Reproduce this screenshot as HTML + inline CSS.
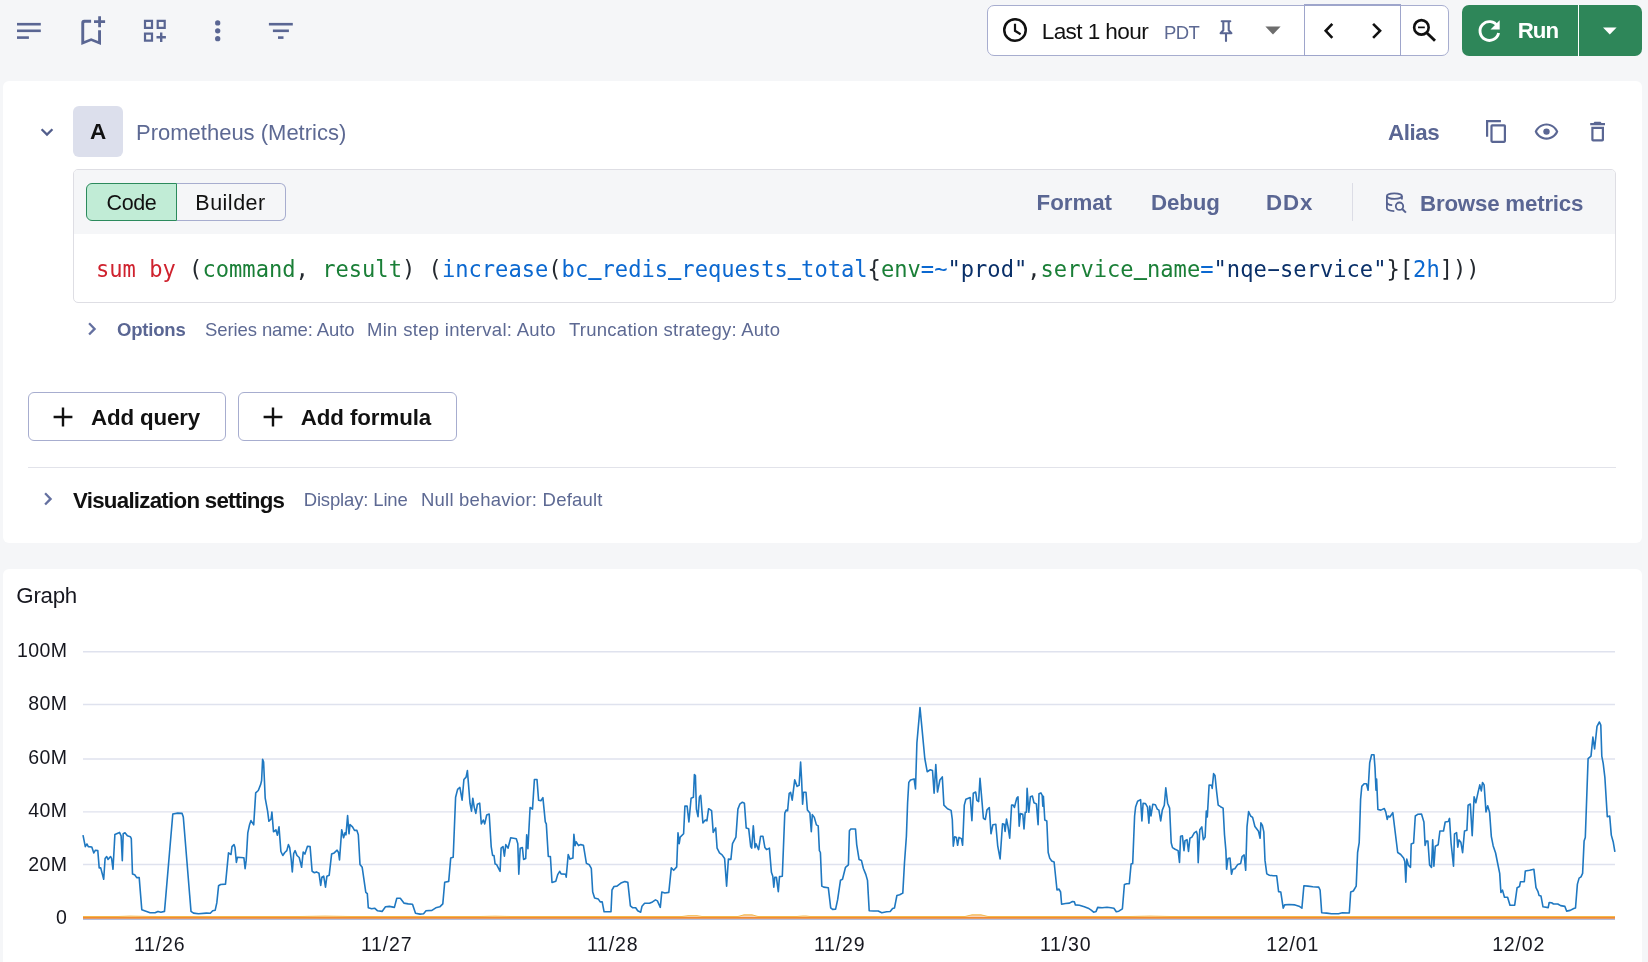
<!DOCTYPE html>
<html lang="en">
<head>
<meta charset="utf-8">
<title>Explore</title>
<style>
*{box-sizing:border-box;margin:0;padding:0}
html,body{width:1648px;height:962px;overflow:hidden}
body{background:#f5f6f8;font-family:"Liberation Sans",sans-serif;color:#16171f;position:relative}
.abs{position:absolute}
.t{position:absolute;white-space:pre;line-height:1}
.card{position:absolute;background:#fff;border-radius:6px}
svg{position:absolute;overflow:visible}
.ic{fill:#5a6693}
.sub{color:#5d6993}
.lnk{color:#5a6693;font-weight:700}
.mono{font-family:"DejaVu Sans Mono","Liberation Mono",monospace;font-size:22.1px}
.u{display:inline-block;transform-origin:50% 100%;transform:translateY(-4.5px) scaleY(2.2)}
.k{color:#cf222e}.g{color:#1a7f37}.b{color:#0b68d0}.d{color:#24292f}.s{color:#0a3069}
.yl{position:absolute;left:0;width:67.3px;text-align:right;font-size:19.5px;letter-spacing:.4px;line-height:1;white-space:pre;color:#16171f}
.xl{position:absolute;width:80px;text-align:center;font-size:19.5px;letter-spacing:.85px;line-height:1;white-space:pre;color:#16171f;top:934.5px}
</style>
</head>
<body><div style="position:absolute;left:0;top:0;width:1648px;height:962px;will-change:transform">
<!-- ===== top toolbar ===== -->
<svg class="ic" style="left:0;top:0" width="320" height="62" viewBox="0 0 320 62">
  <!-- notes -->
  <rect x="17" y="22.9" width="23.8" height="2.6"/><rect x="17" y="29.5" width="23.8" height="2.6"/><rect x="17" y="36.3" width="11.9" height="2.6"/>
  <!-- bookmark add -->
  <path d="M91.1 19.8H84.2a2.9 2.9 0 0 0-2.9 2.9V45.1L91.15 41.1 101 45.1V30.2H98.1V41L91.15 38.2 84.2 41V23.4a.7 .7 0 0 1 .7-.7H91.1z"/>
  <path d="M98.2 16.2h2.8v4.1h4.1v2.8h-4.1v4.1h-2.8v-4.1h-4.2v-2.8h4.2z"/>
  <!-- dashboard customize -->
  <path d="M143.9 19.8h9.2v9.2h-9.2zM146.1 22v4.8h4.8V22zM156.6 19.8h9.2v9.2h-9.2zM158.8 22v4.8h4.8V22zM143.9 32.5h9.2v9.2h-9.2zM146.1 34.7v4.8h4.8v-4.8z" fill-rule="evenodd"/>
  <path d="M160 32.5h2.4v3.5h3.5v2.4h-3.5v3.5H160v-3.5h-3.5v-2.4h3.5z"/>
  <!-- more vert -->
  <circle cx="217.7" cy="22.9" r="2.65"/><circle cx="217.7" cy="30.8" r="2.65"/><circle cx="217.7" cy="38.7" r="2.65"/>
  <!-- filter list -->
  <rect x="268.9" y="22.9" width="23.9" height="2.6"/><rect x="272.9" y="29.5" width="16" height="2.6"/><rect x="278" y="36.3" width="5.5" height="2.6"/>
</svg>

<!-- time picker -->
<div class="abs" style="left:987px;top:5px;width:462px;height:51px;background:#fff;border:1px solid #a7adcf;border-radius:7px"></div>
<div class="abs" style="left:1304.2px;top:4px;width:96.8px;height:52px;background:#fff;border:1px solid #9ea5cb;border-top-width:2px;border-left-width:1.6px;border-bottom-width:1.2px"></div>
<svg style="left:1002px;top:18px" width="26" height="26" viewBox="0 0 26 26"><circle cx="13" cy="11.95" r="10.75" fill="none" stroke="#111" stroke-width="2.5"/><path d="M13 5.8v7l5.6 3.4" fill="none" stroke="#111" stroke-width="2.2"/></svg>
<div class="t" style="left:1041.7px;top:20.5px;font-size:22.6px;color:#111;letter-spacing:-.6px">Last 1 hour</div>
<div class="t sub" style="left:1164px;top:23.5px;font-size:18.5px;letter-spacing:-.6px">PDT</div>
<svg style="left:1214.7px;top:18px" width="24" height="26" viewBox="0 0 24 26"><path d="M6.7 3.3h8.6M8.3 3.3v8.9l-2.7 3h10.8l-2.7-3v-8.9M11 15.2v7.7" fill="none" stroke="#5a6693" stroke-width="2.1" stroke-linejoin="round" stroke-linecap="round"/></svg>
<svg style="left:1264px;top:26px" width="18" height="10" viewBox="0 0 18 10"><path d="M1.4 .6h15.2l-7.6 7.900z" fill="#6d6d6d"/></svg>
<svg style="left:1318px;top:19px" width="22" height="24" viewBox="0 0 22 24"><path d="M14.3 4.8L7.7 11.85l6.6 7.05" fill="none" stroke="#111" stroke-width="2.6"/></svg>
<svg style="left:1366px;top:19px" width="22" height="24" viewBox="0 0 22 24"><path d="M7.1 4.8l6.96 7.05-6.96 7.05" fill="none" stroke="#111" stroke-width="2.6"/></svg>
<svg style="left:1410px;top:16px" width="30" height="30" viewBox="0 0 30 30"><circle cx="11.4" cy="11.4" r="7.25" fill="none" stroke="#111" stroke-width="2.6"/><path d="M16.7 16.7l8.3 8" stroke="#111" stroke-width="2.9"/><path d="M8 11.4h6.8" stroke="#111" stroke-width="1.7"/></svg>

<!-- run button -->
<div class="abs" style="left:1462px;top:5px;width:180px;height:51px;background:#2e8659;border-radius:7px"></div>
<div class="abs" style="left:1578.3px;top:5px;width:1.1px;height:51px;background:#fff"></div>
<svg style="left:1476px;top:17px" width="28" height="28" viewBox="0 0 28 28"><path d="M21.5 9.2A9.4 9.4 0 1 0 22.6 16" fill="none" stroke="#fff" stroke-width="2.9"/><path d="M23.7 3.3v9.2h-9.2z" fill="#fff"/></svg>
<div class="t" style="left:1517.8px;top:20.2px;font-size:22.3px;font-weight:700;color:#fff;letter-spacing:-1.05px">Run</div>
<svg style="left:1601px;top:26px" width="18" height="10" viewBox="0 0 18 10"><path d="M2 1.6h13.6L8.8 8.4z" fill="#fff"/></svg>
<!-- ===== query card ===== -->
<div class="card" style="left:2.7px;top:80.7px;width:1639.3px;height:462.3px"></div>
<svg style="left:38px;top:122.5px" width="18" height="18" viewBox="0 0 18 18"><path d="M3.6 6.2L9 11.6l5.4-5.4" fill="none" stroke="#525e8c" stroke-width="2.3"/></svg>
<div class="abs" style="left:73px;top:106px;width:50px;height:51px;background:#dcdfec;border-radius:6px"></div>
<div class="t" style="left:73px;width:50px;text-align:center;top:120.5px;font-size:22.5px;font-weight:700;color:#111">A</div>
<div class="t sub" style="left:136px;top:121.7px;font-size:22px;letter-spacing:0px">Prometheus (Metrics)</div>
<div class="t lnk" style="left:1388px;top:122px;font-size:22.3px;letter-spacing:-.38px">Alias</div>
<svg class="ic" style="left:1480px;top:116px" width="140" height="32" viewBox="0 0 140 32">
  <!-- copy -->
  <path d="M6 4.1h14.9v2.2H8.2v14.5H6z"/><path d="M12.2 8.2h12a1.8 1.8 0 0 1 1.8 1.8v15.1a1.8 1.8 0 0 1-1.8 1.8h-12a1.8 1.8 0 0 1-1.8-1.8V10a1.8 1.8 0 0 1 1.8-1.8zM12.6 10.4v14.3h11.2V10.4z" fill-rule="evenodd"/>
  <!-- eye -->
  <path d="M66.5 7.4c-5.7 0-10.2 3.7-11.8 8.2 1.6 4.5 6.1 8.2 11.8 8.2s10.2-3.7 11.8-8.2c-1.6-4.5-6.1-8.2-11.8-8.2zm0 2.2c4.3 0 7.9 2.6 9.4 6-1.5 3.4-5.1 6-9.4 6s-7.9-2.6-9.4-6c1.5-3.4 5.1-6 9.4-6z" fill-rule="evenodd"/><circle cx="66.5" cy="15.6" r="3.2"/>
  <!-- trash -->
  <path d="M114.5 5.7h6l1 1.2h3.5v2.3h-14.8V6.9h3.3z"/><path d="M111.3 10.7h12.7v13a1.8 1.8 0 0 1-1.8 1.8h-9.1a1.8 1.8 0 0 1-1.8-1.8zM113.5 12.9v10.4h8.3V12.9z" fill-rule="evenodd"/>
</svg>

<!-- code box -->
<div class="abs" style="left:73px;top:169px;width:1543px;height:134px;background:#fff;border:1px solid #dedee4;border-radius:5px;overflow:hidden"><div style="height:64px;background:#f5f6f8"></div></div>
<div class="abs" style="left:86px;top:183px;width:91px;height:38px;background:#c1ecd6;border:1px solid #2b8a5c;border-radius:6px 0 0 6px"></div>
<div class="abs" style="left:177px;top:183px;width:109px;height:38px;border:1px solid #a7adcf;border-left:none;border-radius:0 6px 6px 0"></div>
<div class="t" style="left:106.6px;top:193px;font-size:21.5px;color:#111;letter-spacing:-.45px">Code</div>
<div class="t" style="left:195.3px;top:193px;font-size:21.5px;color:#111;letter-spacing:.5px">Builder</div>
<div class="t lnk" style="left:1036.6px;top:192.2px;font-size:22.3px;letter-spacing:-.04px">Format</div>
<div class="t lnk" style="left:1151px;top:192.2px;font-size:22.3px;letter-spacing:-.1px">Debug</div>
<div class="t lnk" style="left:1266px;top:192.2px;font-size:22.3px;letter-spacing:.85px">DDx</div>
<div class="abs" style="left:1352px;top:183px;width:1px;height:38px;background:#dcdde6"></div>
<svg style="left:1380px;top:185.6px" width="30" height="30" viewBox="0 0 30 30"><g fill="none" stroke="#55618f" stroke-width="1.8"><ellipse cx="14.4" cy="10.1" rx="7.5" ry="2.8"/><path d="M6.9 10.1v12c0 1.7 3 2.9 7.4 3M21.9 10.1v3.4M6.9 16c0 1.7 2 2.9 5.3 3.2"/><circle cx="19.5" cy="20.2" r="3.7"/><path d="M22.3 23l3.6 3.6" stroke-width="2"/></g></svg>
<div class="t lnk" style="left:1420px;top:193px;font-size:22.3px;letter-spacing:-.2px">Browse metrics</div>

<div class="t mono" style="left:96px;top:257.6px"><span class="k">sum by</span><span class="d"> (</span><span class="g">command</span><span class="d">, </span><span class="g">result</span><span class="d">) (</span><span class="b">increase</span><span class="d">(</span><span class="b">bc<span class="u">_</span>redis<span class="u">_</span>requests<span class="u">_</span>total</span><span class="d">{</span><span class="g">env</span><span class="b">=~</span><span class="s">"prod"</span><span class="d">,</span><span class="g">service<span class="u">_</span>name</span><span class="b">=</span><span class="s">"nqe<span style="display:inline-block;transform:translateY(-1.2px) scaleX(1.9)">-</span>service"</span><span class="d">}[</span><span class="b">2h</span><span class="d">]))</span></div>

<!-- options row -->
<svg style="left:83px;top:320px" width="18" height="18" viewBox="0 0 18 18"><path d="M6.1 3.3l5.5 5.6-5.5 5.6" fill="none" stroke="#6470a0" stroke-width="2.3"/></svg>
<div class="t lnk" style="left:117px;top:320.8px;font-size:18.5px;letter-spacing:-.2px">Options</div>
<div class="t sub" style="left:205px;top:320.8px;font-size:18.5px;letter-spacing:-.1px">Series name: Auto</div>
<div class="t sub" style="left:367px;top:320.8px;font-size:18.5px;letter-spacing:.3px">Min step interval: Auto</div>
<div class="t sub" style="left:569px;top:320.8px;font-size:18.5px;letter-spacing:.25px">Truncation strategy: Auto</div>

<!-- add buttons -->
<div class="abs" style="left:28px;top:392px;width:198px;height:49px;background:#fff;border:1px solid #a7adcf;border-radius:6px"></div>
<div class="abs" style="left:238px;top:392px;width:219px;height:49px;background:#fff;border:1px solid #a7adcf;border-radius:6px"></div>
<svg style="left:52.9px;top:407.1px" width="20" height="20" viewBox="0 0 20 20"><path d="M10 .6v18.8M.6 10h18.8" stroke="#111" stroke-width="2.4"/></svg>
<svg style="left:262.9px;top:407.1px" width="20" height="20" viewBox="0 0 20 20"><path d="M10 .6v18.8M.6 10h18.8" stroke="#111" stroke-width="2.4"/></svg>
<div class="t" style="left:91px;top:406.6px;font-size:22.3px;font-weight:700;color:#111;letter-spacing:-.14px">Add query</div>
<div class="t" style="left:300.7px;top:406.6px;font-size:22.3px;font-weight:700;color:#111;letter-spacing:-.08px">Add formula</div>

<div class="abs" style="left:28px;top:467px;width:1588px;height:1px;background:#e2e3ea"></div>

<svg style="left:38.7px;top:490px" width="18" height="18" viewBox="0 0 18 18"><path d="M6.1 3.3l5.5 5.6-5.5 5.6" fill="none" stroke="#6470a0" stroke-width="2.3"/></svg>
<div class="t" style="left:73px;top:489.8px;font-size:22.3px;font-weight:700;color:#111;letter-spacing:-.74px">Visualization settings</div>
<div class="t sub" style="left:303.7px;top:490.8px;font-size:18.5px;letter-spacing:-.15px">Display: Line</div>
<div class="t sub" style="left:421px;top:490.8px;font-size:18.5px;letter-spacing:.22px">Null behavior: Default</div>
<!-- ===== graph card ===== -->
<div class="card" style="left:2.7px;top:568.7px;width:1639.3px;height:420px"></div>
<div class="t" style="left:16.3px;top:585.2px;font-size:22.3px;color:#16171f;letter-spacing:-.25px">Graph</div>
<div class="yl" style="top:640.9px">100M</div>
<div class="yl" style="top:693.7px">80M</div>
<div class="yl" style="top:747.7px">60M</div>
<div class="yl" style="top:800.8px">40M</div>
<div class="yl" style="top:854.8px">20M</div>
<div class="yl" style="top:907.7px">0</div>
<div class="xl" style="left:119.7px">11/26</div>
<div class="xl" style="left:346.7px">11/27</div>
<div class="xl" style="left:572.7px">11/28</div>
<div class="xl" style="left:799.7px">11/29</div>
<div class="xl" style="left:1025.7px">11/30</div>
<div class="xl" style="left:1252.7px">12/01</div>
<div class="xl" style="left:1478.7px">12/02</div>
<svg style="left:0;top:0" width="1648" height="962" viewBox="0 0 1648 962">
  <g stroke="#dfe2ee" stroke-width="1.4"><path d="M83 651.7H1615M83 704.5H1615M83 759H1615M83 811.9H1615M83 864.5H1615"/></g>
  <polyline fill="none" stroke="#1f78c1" stroke-width="1.6" stroke-linejoin="round" points="83,835.2 85.3,846.6 86.9,844 88.3,846.6 91.8,847 93.8,852.9 95.4,850.2 97.8,850.6 99.2,867.9 100.7,867.9 103.7,879.2 105.1,858.5 106.7,856.5 108,859.4 110.6,856.5 111.6,858.5 113,869.3 114.9,834.4 119.5,832.4 121.1,835.8 122.3,860.8 123.2,833.8 125,832.8 127.4,835.8 130.3,836.7 131.3,838.7 132.5,873.9 134.7,874.8 136.7,877.6 139.2,877.6 141.8,909.8 145.2,911 150.1,912.8 155,912.8 158,911.4 160.9,912.2 164.5,911.4 172.8,814 177.7,813.1 182.1,813.4 183.3,817 191,911.4 193.5,913.1 198.5,913.7 206.4,913.1 210.3,913.3 212.7,910.8 215.2,910.2 216.8,902.9 218.6,885.7 220.6,884.5 225.5,884.1 228.5,852.9 231,854.5 232,846.6 234,844.6 235,847.6 236.4,862.4 237.4,857.3 243.9,857.7 245.1,868.7 246.2,860.4 247.8,832.8 249.4,825.3 251,820.6 253.7,824.9 255.7,792.9 258.3,790.5 260.7,784.4 261.6,780.5 262.6,759.3 263.6,762.1 265.2,798.2 267.6,811.1 268.9,821.3 271.1,819 271.9,812.1 273.5,831.8 275.9,829.8 277.4,835.2 279,826.9 280.9,851.5 282.8,855.5 284.8,852.5 286.8,850.6 288.4,844.6 289.7,847.6 291.1,858.5 292.3,871.9 293.7,853.5 295.1,850.6 297,855.5 299.2,857.5 301.6,867.3 303.2,852.1 304.9,854.1 307.5,846.2 310.1,846.6 312.1,871.3 314.4,872.7 316.4,871.9 319,873.3 320.7,885.5 321.9,877.2 323.7,876.2 325.5,887.1 326.9,876.2 329.2,875.2 331.6,854.1 334.2,852.9 337.1,850.2 338.5,852.5 339.5,860 341.7,829.8 343.6,837.7 345,832.8 346,834.8 347.6,815.6 349,833.8 350,824.5 352.5,826.9 354.5,830.4 356.9,830.4 358.3,834.8 360,864.4 362.2,867.3 365.8,892.4 367.3,893.6 368.3,907.8 371.7,908.8 374.6,908.2 377.6,910.8 382.1,911.4 385.5,906.8 389.4,906.4 394.4,907.4 396.8,898.3 400.3,898.3 403.9,903.1 408.2,903.9 412.5,904.3 415.5,913.3 420,914.1 423.6,913.7 426,910.8 431.9,910.4 435.8,907.8 439.8,906.8 442.8,903.9 444.7,882.2 448.7,881.4 450.7,858.1 453.2,857.3 455.6,797.3 457.6,789.4 459.9,787.4 462.1,800.2 463.9,779.5 466.1,777.1 467.4,770.6 470,803.2 471.5,811.1 472.8,798.2 474.2,807.1 475.8,813.4 477.4,804.2 479.7,803.2 481.3,823.9 483.3,820 484.7,823.9 486.7,815 489.2,814 491.2,846.6 492.6,855.5 494,855.5 495.1,864 496.5,864.4 500.1,871.3 501.1,848.2 503,846.6 504.4,856.1 505.8,844.6 508,848.2 510.7,837.7 516.3,838.7 517.8,843.7 518.8,874.3 520.2,848.2 522.4,847.6 523.6,859.4 525.7,858.5 526.7,834.8 527.9,848.6 530.1,807.5 532.5,809.1 534.4,779.5 537,779.5 538.6,800.2 540.9,800.8 542.9,797.7 545.3,821.9 546.3,823.9 548.3,856.5 550.4,856.5 552,882.5 555.8,881.2 557.7,874.6 559.7,871.3 561.1,873.9 565.6,874.3 566.2,877.2 568.2,854.5 570,859.1 572.9,858.1 573.9,834.4 575.1,845.6 576.1,841.7 578.5,845.6 580.8,844.6 583.4,845.2 586.4,863.4 589.3,864.8 591.3,868.3 592.7,892 594.6,897.9 598.2,898.9 600.2,901.9 602.2,901.9 604.1,911.8 611,911.8 612,890 614,886.5 617,886.1 620.9,883.1 624.9,881.6 627.8,882.2 630.4,905.8 632.8,907.8 635.7,907.8 637.7,910.8 640.7,912.2 642,906.2 644.6,903.3 649.5,903.3 652.5,901.9 655.5,899.9 657.4,900.9 660,906.8 660.3,907.4 661.8,892 664.8,893 668.8,892.4 671.3,867.9 673.7,870.3 676.7,866.9 678,832.8 679.2,843.7 680.2,837.1 683.6,833.8 684.9,806.1 687.1,806.1 688.9,821.9 691.1,798.2 693.4,797.3 694.4,774.6 695.4,775.5 696.4,809.1 698,816.6 699.4,797.3 700.7,795.3 702.9,822.9 705.3,820 706.9,820.9 708.6,808.7 711.6,810.7 713.2,832.4 715.7,827.9 717.1,848.2 719.5,852.9 722.1,854.9 724.6,858.5 726.6,886.1 728.4,859.1 730.9,859.4 732.5,843.7 735.9,837.1 737.9,809.1 739.8,804.2 742.4,802.2 744.4,803.2 746.2,827.9 748.7,828.8 750.7,846.6 751.7,848.2 753.3,825.9 755,847.6 756,843.7 758.6,849.6 760.6,836.2 762.9,836.2 764.9,847.6 766.5,849.6 769.4,848.2 771.4,872.3 772.8,876.2 773.8,887.1 774.8,877.2 776.4,877.2 778.3,891.6 779.5,876.6 782.3,876.2 784.8,813.1 786.2,810.1 787.6,810.7 789.2,793.3 790.6,792.3 792.2,800.2 794.7,779.9 797.1,786.4 799.1,785.4 800.6,762.1 801.6,779.5 802.6,804.2 803.6,792.3 806,792.3 807.4,810.1 809.9,813.1 811.3,831.8 812.3,814.6 814.3,817.4 816.4,824.9 818.2,825.9 819.4,850.6 820.4,852.5 821.8,886.1 823.7,887.1 828.3,887.7 830.7,907.8 832.6,909.4 835.6,909.2 837.6,899.9 840.5,880.2 842.5,879.2 845.5,867.3 848.4,864.8 849.4,830.8 850.8,829 855.5,829 856.7,844.6 859.1,859.6 861.5,860.6 863.4,868.5 865.8,874.4 867.5,880.4 869.2,910.8 873.5,911 878.2,911 881.8,912.7 886.6,911.7 890.2,911.5 892.6,908.4 894.5,907.9 896.9,895.5 899.7,894.7 902.8,893.1 904.5,862.5 906.4,836.2 907.6,802.7 908.8,782.4 910.5,780 914.1,778.9 915.5,788.9 916.9,743 920,707.6 922,728.7 924.8,758.5 927.2,771.7 930.3,769.8 932.5,770.5 934.1,793.2 935.8,764.5 937.5,792 939.9,780 942.3,776.9 943.9,805.1 947.5,808.7 951.1,810.4 952.3,819.5 953.3,846.2 954.7,836.7 956.4,837.4 957.6,845.3 959,837.4 961.4,838.6 962.6,845.3 964.3,805.1 965.9,799.2 970.2,797.5 971.9,820.7 973.3,793.2 975.7,792 976.9,800.4 978.6,801.6 980,778.4 981.5,795.6 983.4,818.3 985.3,819.5 987,809.9 989.3,807.5 991,833.8 992.9,824.7 995.8,824.3 997.7,845.8 1000.1,858.9 1002.5,823.8 1004.2,824.3 1005.1,831.4 1006.5,819 1008,826.6 1009.7,838.1 1011.6,805.1 1013.2,805.1 1014.4,807.5 1016.8,798 1018,796.8 1019.2,826.2 1020.4,813.5 1022.8,814.2 1024,829 1025.2,812.3 1026.4,812.3 1027.1,788.4 1028.8,812.3 1030.4,796.8 1032.4,796.1 1034,802.7 1036.4,803.9 1038.1,824.7 1039,793.7 1040.9,792.9 1042.2,795.3 1042.8,806.1 1043.4,796.3 1044.8,820 1046.8,820.9 1048.2,852.5 1049.7,858.1 1051.7,861 1054.1,862 1057,890 1059,889.1 1060.6,892 1061.6,904.3 1065.5,903.5 1069.5,903.1 1072.4,901.5 1074.4,901.9 1075.4,904.9 1079.4,905.3 1084.3,906.8 1088.2,908.2 1091.2,910.2 1093.6,912.2 1096.1,911.4 1097.7,907.4 1102.1,907.8 1107,907.2 1110.9,907.8 1113.9,908.2 1116.3,911.8 1118.8,911.2 1122.4,908.8 1124.4,884.5 1126.7,883.7 1129.3,883.7 1131.1,864 1132.7,863.4 1134.6,816 1135.6,807.1 1137.6,801.2 1140.6,799.6 1141.9,820.9 1143.1,803.2 1145.5,803.6 1147.5,807.1 1148.9,823.3 1149.8,806.1 1151,816 1152.8,804.2 1155.4,804.8 1157.3,809.1 1158.9,810.1 1160.7,820.9 1162.3,810.1 1164.3,805.2 1165.8,787.8 1167.6,803.2 1169.6,808.1 1171.2,842.7 1172.5,847.6 1175.1,849.2 1178.1,850.6 1179.5,862.4 1180.6,836.2 1182.4,835.8 1184,850.6 1185,840.7 1187,839.7 1188.5,851.5 1189.9,838.3 1191.9,837.1 1194.3,832.8 1196.4,831.4 1197.4,834.8 1198.2,862.8 1199.8,829.8 1201.8,826.9 1203.3,839.7 1205.1,837.1 1206.3,811.1 1207.3,817 1209.1,785 1211.6,785.4 1212.2,788.4 1213.6,773.6 1215,775.5 1216.6,791.3 1218.2,805.2 1220.5,806.7 1223.1,808.1 1224.5,834.8 1225.9,850.6 1226.6,869.3 1228,858.5 1230,858.1 1231.5,874.3 1232.8,869.3 1234.8,868.7 1237.8,864.4 1240.7,863.4 1242.1,856.5 1244.1,854.9 1245.7,870.3 1247,826.9 1248.6,811.5 1250.6,816 1252.6,817.4 1254.9,826.5 1258.5,831.2 1260.1,838.3 1260.9,822.9 1262.4,825.3 1263.8,831.8 1265,860.4 1266.8,873.9 1269.4,875.2 1273.3,875.8 1276.7,875.8 1278.6,891.6 1280.8,892 1283.2,908.2 1284.6,904.9 1289.1,904.5 1295,904.9 1299,906.2 1301.9,908.2 1303.9,885.7 1307.9,886.1 1312.8,886.7 1318.7,887.1 1320.1,890 1321.7,912.8 1326.6,913.1 1331.5,913.7 1338.5,913.7 1342.4,912.8 1349.3,913 1350.7,892 1353.3,891 1356.2,886.1 1357.6,852.5 1359.2,842.7 1360.6,799.2 1361.8,786.4 1364.1,783.8 1366.5,783.8 1368.1,790.3 1369.7,762.7 1371.6,754.8 1374,754.8 1375,767.6 1376,790.3 1376.6,779.1 1377.9,809.5 1380.9,810.1 1384.3,808.5 1385.8,812.1 1387.2,819.4 1388.2,816 1389.8,817 1392.8,812.7 1397.7,852.5 1400.7,854.5 1403.6,858.1 1404.8,861.4 1405.8,882.2 1406.8,859.1 1408.5,865.4 1410.5,867.3 1411.2,844 1413.6,843 1415.3,816 1417.7,814.3 1421.5,814.1 1423.9,822 1425.1,845.4 1426.3,841.1 1427.9,841.1 1429.6,865 1431.5,867.4 1432.7,839.9 1433.9,866.2 1435.3,846.3 1438.2,844.7 1439.9,831 1443.5,831 1445.2,822 1448.3,821.5 1449.5,818.4 1451.1,843.5 1453.5,866.2 1454.5,833.9 1456.6,832.7 1457.8,847.1 1459,839.9 1460.9,842.3 1462.6,852.6 1464.5,831 1466.9,830.3 1468.1,805.2 1470.3,804 1472.2,835.8 1474.1,796.8 1475.8,802.8 1478.1,792.1 1479.8,784.9 1481.3,790.9 1482.5,782.5 1484.1,784.9 1486,811.9 1487.7,805.7 1489.6,812.4 1491.3,836.3 1493.2,845.9 1495.6,853 1498,865 1499.7,873.4 1500.9,892.5 1502.5,890.1 1504.5,897.3 1507.6,897.3 1510,905.2 1514.7,905.2 1517.1,887.7 1519.5,886.5 1520.5,881.7 1524.3,881.7 1525.3,871 1529.6,870.3 1533.9,869.3 1536,887.7 1537.9,891.3 1539.1,895.6 1541,896.1 1543,906.8 1548.2,907.6 1549.2,902.5 1551.6,902.8 1553.5,904 1557.8,904 1560.6,905.6 1564.9,906.4 1566.6,911.1 1570.2,910.4 1573.8,908.5 1575.5,908 1577.4,884.1 1579.1,878.1 1581,876.9 1582.6,873.4 1584.1,841.1 1585.3,837.5 1588.1,758.6 1591,756.2 1592.9,737.1 1594.6,749 1597,726.3 1599.4,722 1600.8,725.1 1601.8,756.2 1603.2,763.4 1604.9,777.7 1607.3,816.7 1609.7,816 1611.3,835.1 1613.3,842.3 1614.9,851.8"/>
  <path d="M83 919.1H1615" stroke="#7f8fc6" stroke-width="1"/>
  <path d="M83 917.75H1615" stroke="#f08a35" stroke-width="2.1"/>
  <path d="M83 916.5H118L130 916.1 150 916.5H300L325 916.1 350 916.5H480L495 916.2 510 916.5H682L688 915.7H697L702 916.5H738L744 914.8H752L758 916.5H797L803 916H806L810 916.5H965L972 914.8H981L988 916.5H1130L1150 916.1 1170 916.5H1615" stroke="#f4b63a" stroke-width=".9" fill="#f9c9a0"/>
</svg>
</div></body>
</html>
